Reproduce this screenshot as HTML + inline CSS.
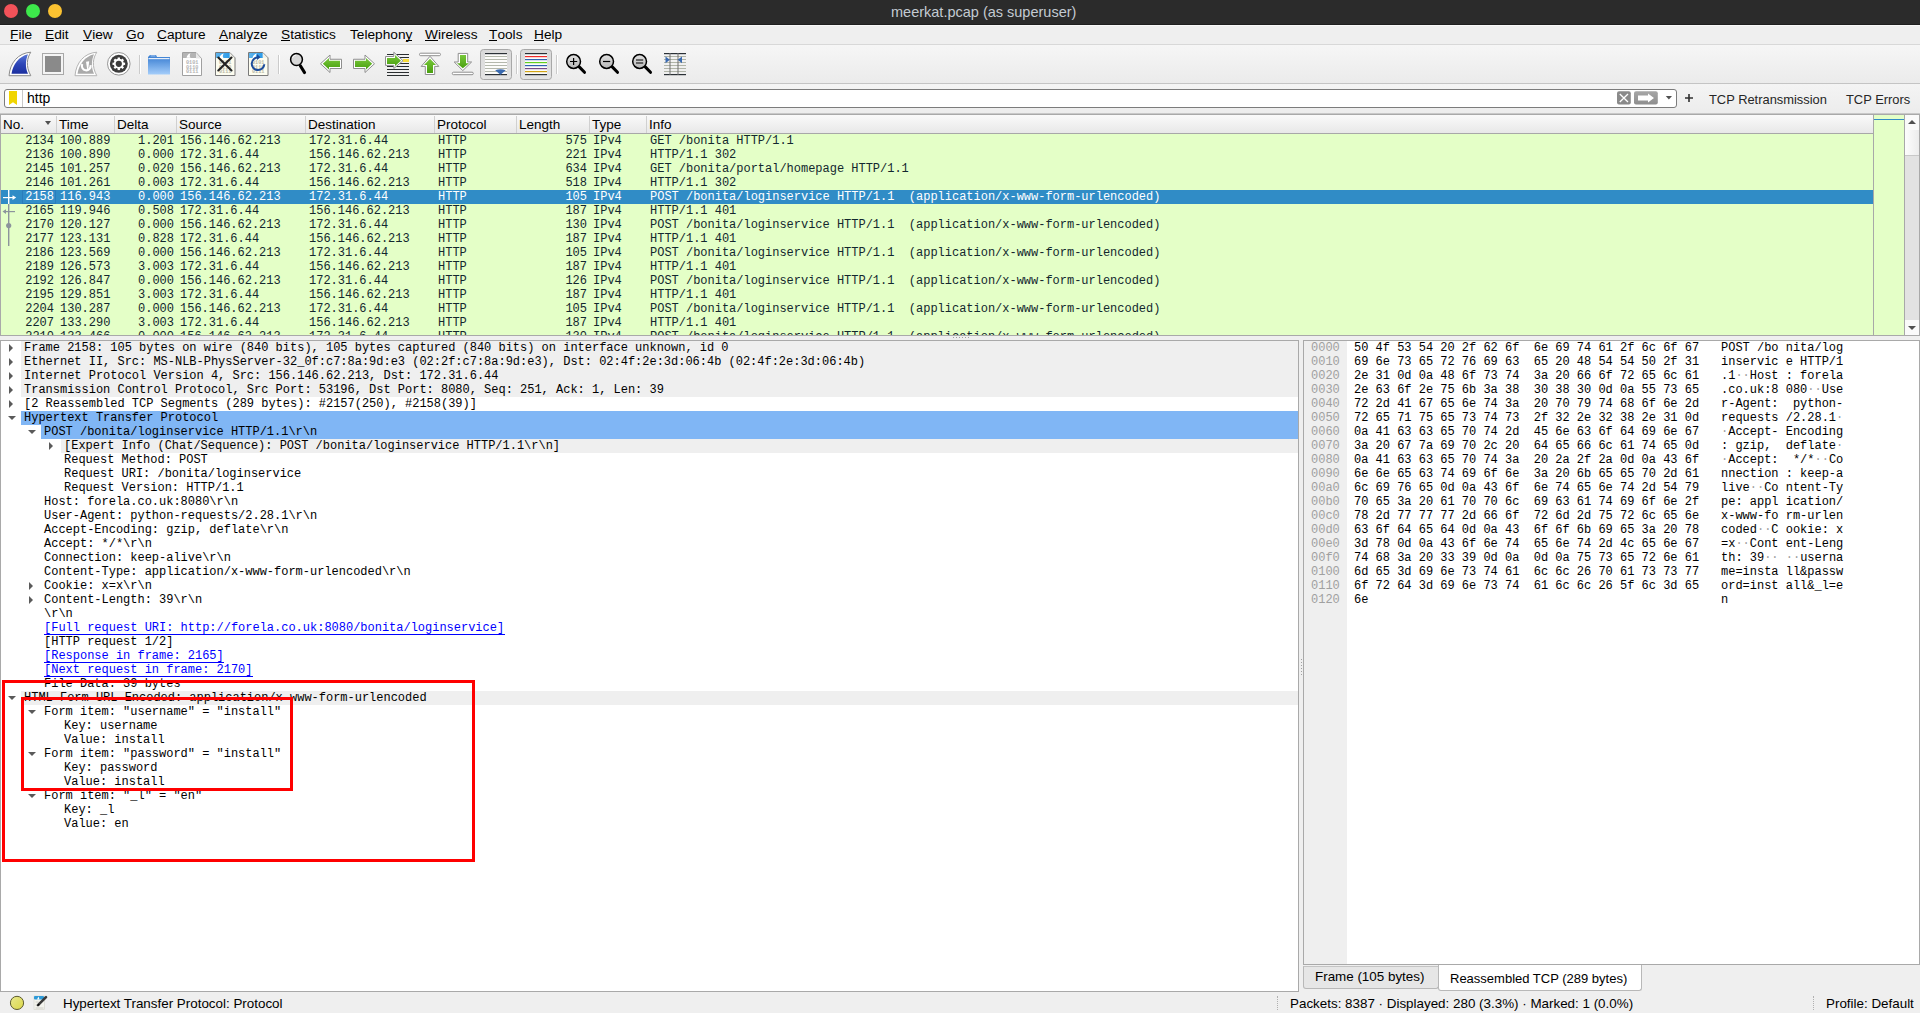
<!DOCTYPE html><html><head><meta charset="utf-8"><style>
*{margin:0;padding:0;box-sizing:border-box}
html,body{width:1920px;height:1013px;overflow:hidden;background:#efefef;font-family:"Liberation Sans",sans-serif;position:relative}
.ab{position:absolute}
.m{font-family:"Liberation Mono",monospace;font-size:12px;white-space:pre;line-height:14px;letter-spacing:-0.012px}
.s{font-family:"Liberation Sans",sans-serif;font-size:13px;white-space:pre}
.menu span{position:absolute;top:27px;font-size:13.7px;color:#000;line-height:15px}
.menu u{text-decoration:none;position:relative}.menu u:after{content:'';position:absolute;left:0;right:0;top:13px;height:1px;background:#000}
.hdr span{position:absolute;top:117px;font-size:13.5px;line-height:15px;color:#000}
.hdrdiv{position:absolute;top:116px;width:1px;height:17px;background:#d0d0d0}
.row{position:absolute;left:1px;width:1872px;height:14px;background:#e4ffc7;color:#12272e}
.row.sel{background:#308cc6;color:#fff}
.row span{position:absolute;top:0}
.dr{position:absolute;height:14px;color:#000}
.hx{position:absolute;height:14px;color:#000}
</style></head><body>

<div class="ab" style="left:0;top:0;width:1920px;height:25px;background:#2b2b2b"></div>
<div class="ab" style="left:0;top:24px;width:1920px;height:1px;background:#1f1f1f"></div>
<div class="ab" style="left:4px;top:4px;width:14px;height:14px;border-radius:50%;background:#f25259"></div>
<div class="ab" style="left:26px;top:4px;width:14px;height:14px;border-radius:50%;background:#3de84b"></div>
<div class="ab" style="left:48px;top:4px;width:14px;height:14px;border-radius:50%;background:#fbc231"></div>
<div class="ab s" style="left:891px;top:3px;font-size:14.5px;line-height:18px;color:#c3cad2">meerkat.pcap (as superuser)</div>
<div class="ab" style="left:0;top:25px;width:1920px;height:1px;background:#f9f9f9"></div>
<div class="ab" style="left:0;top:44px;width:1920px;height:1px;background:#d8d8d8"></div>
<div class="menu">
<span style="left:10px"><u>F</u>ile</span>
<span style="left:45px"><u>E</u>dit</span>
<span style="left:83px"><u>V</u>iew</span>
<span style="left:126px"><u>G</u>o</span>
<span style="left:157px"><u>C</u>apture</span>
<span style="left:219px"><u>A</u>nalyze</span>
<span style="left:281px"><u>S</u>tatistics</span>
<span style="left:350px">Telephon<u>y</u></span>
<span style="left:425px"><u>W</u>ireless</span>
<span style="left:489px"><u>T</u>ools</span>
<span style="left:534px"><u>H</u>elp</span>
</div>
<div class="ab" style="left:0;top:45px;width:1920px;height:38px;background:linear-gradient(#f6f6f6,#ebebeb)"></div>
<div class="ab" style="left:0;top:83px;width:1920px;height:1px;background:#c4c4c4"></div>
<svg class="ab" style="left:0;top:0" width="700" height="84" viewBox="0 0 700 84">
<defs>
<linearGradient id="gfin" x1="0" y1="0" x2="0" y2="1"><stop offset="0" stop-color="#5a78d8"/><stop offset="0.5" stop-color="#2d46b8"/><stop offset="1" stop-color="#1c30a0"/></linearGradient>
<linearGradient id="ggreen" x1="0" y1="0" x2="0" y2="1"><stop offset="0" stop-color="#78c83a"/><stop offset="1" stop-color="#4aa010"/></linearGradient>
<linearGradient id="gfold" x1="0" y1="0" x2="0" y2="1"><stop offset="0" stop-color="#3a7ed0"/><stop offset="0.2" stop-color="#4a8ad8"/><stop offset="1" stop-color="#a4cdfa"/></linearGradient>
<linearGradient id="glens" x1="0" y1="0" x2="0" y2="1"><stop offset="0" stop-color="#e0e0e0"/><stop offset="1" stop-color="#b8b8b8"/></linearGradient>
<linearGradient id="gbtn" x1="0" y1="0" x2="0" y2="1"><stop offset="0" stop-color="#d8d8d8"/><stop offset="1" stop-color="#e4e4e4"/></linearGradient>
<linearGradient id="gdochead" x1="0" y1="0" x2="1" y2="0"><stop offset="0" stop-color="#60b4ec"/><stop offset="1" stop-color="#2a9ae8"/></linearGradient>
</defs>
<!-- capture start fin -->
<path d="M9,75.7 C10,63 18,53 30.8,52.2 C27,58 25.5,66 30.8,75.7 Z" fill="#fff" stroke="#8a8a8a" stroke-width="1"/>
<path d="M11.5,73.7 C13,64 19,56.5 28,54.2 C25.5,60 25,67 28,73.7 Z" fill="url(#gfin)"/>
<!-- stop -->
<rect x="42.5" y="53.5" width="21" height="21" fill="#f4f4f4" stroke="#a8a8a8" stroke-width="1"/>
<rect x="45" y="56" width="16" height="16" fill="#8a8a8a"/>
<!-- restart fin -->
<path d="M75,75.7 C76,63 84,53 96.8,52.2 C93,58 91.5,66 96.8,75.7 Z" fill="#fff" stroke="#b4b4b4" stroke-width="1"/>
<path d="M77.5,73.7 C79,64 85,56.5 94,54.2 C91.5,60 91,67 94,73.7 Z" fill="#aaaaaa"/>
<path d="M82.3,64 A4.4,4.4 0 1 0 90.6,65.2" fill="none" stroke="#fff" stroke-width="2.1"/>
<path d="M86,61.8 L89.2,61.2 L88.2,69.2 L87.2,69.2 Z" fill="#fff"/>
<!-- options gear -->
<circle cx="118.8" cy="63.8" r="11.3" fill="#fff" stroke="#969696" stroke-width="1"/>
<circle cx="118.8" cy="63.8" r="9" fill="#3c3c3c"/>
<g fill="#fff" transform="translate(118.8,63.8)">
<circle r="5"/>
<rect x="-1.15" y="-6.3" width="2.3" height="12.6"/>
<rect x="-1.15" y="-6.3" width="2.3" height="12.6" transform="rotate(45)"/>
<rect x="-1.15" y="-6.3" width="2.3" height="12.6" transform="rotate(90)"/>
<rect x="-1.15" y="-6.3" width="2.3" height="12.6" transform="rotate(135)"/>
</g>
<circle cx="118.8" cy="63.8" r="3.1" fill="#3c3c3c"/>
<!-- separator -->
<rect x="139" y="55" width="1" height="19" fill="#cbcbcb"/><rect x="140" y="55" width="1" height="19" fill="#fff"/>
<!-- folder -->
<path d="M148,57 L150,55 L156,55 L157,57 L170,57 L170,74.5 L148,74.5 Z" fill="url(#gfold)"/>
<rect x="148.5" y="58" width="21" height="1.2" fill="#e6eefa"/>
<rect x="150.5" y="55.3" width="5" height="1.2" fill="#9ec2ee"/>
<!-- open doc (grey) -->
<path d="M182.5,52.5 L196,52.5 L201.5,58.5 L201.5,75.5 L182.5,75.5 Z" fill="#fff" stroke="#a0a0a0" stroke-width="1"/>
<rect x="183" y="53" width="13" height="5" fill="#b4b4b4"/><path d="M196,53 L201,58.5 L196,58.5 Z" fill="#e8e8e8"/>
<path d="M186.5,57.8 C187,55 189,53.5 190.5,53.2 C189.5,55 189.5,56.5 190.5,57.8 Z" fill="#fff"/>
<g font-family="Liberation Mono" font-size="5.2" fill="#b4b4b4" font-weight="bold"><text x="186" y="64.3">0101</text><text x="186" y="68.8">0110</text><text x="186" y="73.3">0111</text></g>
<!-- close doc -->
<path d="M215.5,52.5 L229.8,52.5 L235,57.8 L235,75.5 L215.5,75.5 Z" fill="#fdfdf0" stroke="#7a7a7a" stroke-width="1"/>
<rect x="216" y="53" width="13.8" height="5" fill="url(#gdochead)"/><path d="M229.8,53 L234.5,57.8 L229.8,57.8 Z" fill="#f0f0e8"/>
<path d="M219.5,58 C220,55.5 221.5,54 223.8,53.5 C222.5,55.5 222.5,56.5 223.5,58 Z" fill="#fff"/>
<g font-family="Liberation Mono" font-size="5.2" fill="#b8b8a8" font-weight="bold"><text x="219" y="64.3">0101</text><text x="219" y="68.8">0110</text><text x="219" y="73.3">0111</text></g>
<path d="M218.3,57.6 L231.5,70.5 M231.5,57.6 L218.3,70.5" stroke="#222" stroke-width="2.1" stroke-linecap="round"/>
<!-- reload doc -->
<path d="M248.5,52.5 L262.8,52.5 L268,57.8 L268,75.5 L248.5,75.5 Z" fill="#fdfdf0" stroke="#7a7a7a" stroke-width="1"/>
<rect x="249" y="53" width="13.8" height="5" fill="url(#gdochead)"/><path d="M262.8,53 L267.5,57.8 L262.8,57.8 Z" fill="#f0f0e8"/>
<path d="M252.5,58 C253,55.5 254.5,54 256.8,53.5 C255.5,55.5 255.5,56.5 256.5,58 Z" fill="#fff"/>
<g font-family="Liberation Mono" font-size="5.2" fill="#b8b8a8" font-weight="bold"><text x="252" y="64.3">0101</text><text x="252" y="68.8">0110</text><text x="252" y="73.3">0111</text></g>
<path d="M258.5,57.5 A6.3,6.3 0 1 0 264.3,64.2" fill="none" stroke="#1c4c9c" stroke-width="2"/>
<path d="M257,54 L260.5,57.2 L257,60 Z" fill="#1c4c9c"/>
<!-- separator -->
<rect x="278" y="55" width="1" height="19" fill="#cbcbcb"/><rect x="279" y="55" width="1" height="19" fill="#fff"/>
<!-- find magnifier -->
<path d="M300.5,66 L304.5,72.5" stroke="#000" stroke-width="3.2" stroke-linecap="round"/>
<circle cx="296.5" cy="59.5" r="5.9" fill="#d8d8d8" stroke="#000" stroke-width="1.5"/>
<path d="M292.5,58 A4,4 0 0 1 296,55" fill="none" stroke="#fff" stroke-width="0.8"/>
<!-- go back arrow -->
<path d="M320.5,63.75 L330,55 L330,59.25 L341.5,59.25 L341.5,68.5 L330,68.5 L330,72.5 Z" fill="#fff" stroke="#8e8e8e" stroke-width="1" stroke-linejoin="round"/>
<path d="M322.8,63.75 L329,58 L329,60.8 L340,60.8 L340,67 L329,67 L329,69.5 Z" fill="url(#ggreen)"/>
<!-- go forward arrow -->
<path d="M374.5,63.75 L365,55 L365,59.25 L353.5,59.25 L353.5,68.5 L365,68.5 L365,72.5 Z" fill="#fff" stroke="#8e8e8e" stroke-width="1" stroke-linejoin="round"/>
<path d="M372.2,63.75 L366,58 L366,60.8 L355,60.8 L355,67 L366,67 L366,69.5 Z" fill="url(#ggreen)"/>
<!-- go to packet -->
<g fill="#2a2e30">
<rect x="387" y="54" width="22" height="1"/><rect x="387" y="57" width="22" height="1"/><rect x="387" y="63" width="22" height="1"/><rect x="387" y="66" width="22" height="1"/><rect x="387" y="69" width="22" height="1"/><rect x="387" y="72" width="22" height="1"/><rect x="387" y="75" width="22" height="1"/>
</g>
<rect x="403" y="59" width="6" height="3" fill="#f8dc3c"/>
<path d="M385.5,56.5 L393.8,56.5 L393.8,52.2 L403,60.7 L393.8,68.5 L393.8,65.4 L385.5,65.4 Z" fill="#fff" stroke="#8e8e8e" stroke-width="1" stroke-linejoin="round"/>
<path d="M387,58 L395,58 L395,55 L401,60.7 L395,66 L395,64 L387,64 Z" fill="url(#ggreen)"/>
<!-- first packet -->
<rect x="419.5" y="53.2" width="21" height="2.5" rx="1.2" fill="#fff" stroke="#8e8e8e" stroke-width="1"/>
<path d="M430,56.3 L438.8,66.4 L434.7,66.4 L434.7,74.5 L425.3,74.5 L425.3,66.4 L421.2,66.4 Z" fill="#fff" stroke="#8e8e8e" stroke-width="1" stroke-linejoin="round"/>
<path d="M430,58.8 L436,65 L433,65 L433,73 L427,73 L427,65 L424,65 Z" fill="url(#ggreen)"/>
<!-- last packet -->
<rect x="452.3" y="72.2" width="21" height="2.5" rx="1.2" fill="#fff" stroke="#8e8e8e" stroke-width="1"/>
<path d="M462.8,70.6 L471.6,62 L467.7,62 L467.7,53.4 L458.2,53.4 L458.2,62 L454.2,62 Z" fill="#fff" stroke="#8e8e8e" stroke-width="1" stroke-linejoin="round"/>
<path d="M462.8,68.2 L469,63.3 L466,63.3 L466,55 L460,55 L460,63.3 L457,63.3 Z" fill="url(#ggreen)"/>
<!-- autoscroll pressed button -->
<rect x="480.5" y="49.5" width="31" height="30" rx="3" fill="url(#gbtn)" stroke="#a8a8a8" stroke-width="1"/>
<rect x="485" y="53" width="22" height="22" fill="#fcfcfa"/>
<g fill="#b4b8ac"><rect x="485" y="56" width="22" height="1"/><rect x="485" y="59" width="22" height="1"/><rect x="485" y="62" width="22" height="1"/><rect x="485" y="65" width="22" height="1"/><rect x="485" y="68" width="22" height="1"/><rect x="485" y="71" width="22" height="1"/></g>
<rect x="485" y="53" width="22" height="1.2" fill="#2a3036"/><rect x="485" y="74" width="22" height="1.2" fill="#2a3036"/>
<path d="M495.2,70.2 Q500.5,68.5 505.7,70.2 L500.5,74.8 Z" fill="#3a6ab0"/>
<!-- separator -->
<rect x="516" y="55" width="1" height="19" fill="#cbcbcb"/><rect x="517" y="55" width="1" height="19" fill="#fff"/>
<!-- colorize pressed button -->
<rect x="520.5" y="49.5" width="31" height="30" rx="3" fill="url(#gbtn)" stroke="#a8a8a8" stroke-width="1"/>
<rect x="525" y="53" width="22" height="22" fill="#fcfcfa"/>
<rect x="525" y="53" width="22" height="1.2" fill="#2a3036"/>
<rect x="525" y="56" width="22" height="1.2" fill="#f02a2a"/>
<rect x="525" y="59" width="22" height="1.2" fill="#2f62b2"/>
<rect x="525" y="62" width="22" height="1.2" fill="#62d020"/>
<rect x="525" y="65" width="22" height="1.2" fill="#2f62b2"/>
<rect x="525" y="68" width="22" height="1.2" fill="#744c8a"/>
<rect x="525" y="71" width="22" height="1.2" fill="#d2a414"/>
<rect x="525" y="74" width="22" height="1.2" fill="#2a3036"/>
<!-- separator -->
<rect x="556" y="55" width="1" height="19" fill="#cbcbcb"/><rect x="557" y="55" width="1" height="19" fill="#fff"/>
<!-- zoom in / out / normal -->
<g>
<path d="M579,66.6 L584.5,72.3" stroke="#000" stroke-width="3" stroke-linecap="round"/>
<circle cx="573.6" cy="61.5" r="6.9" fill="url(#glens)" stroke="#000" stroke-width="1.5"/>
<path d="M570,61.5 h7.2 M573.6,57.9 v7.2" stroke="#000" stroke-width="1.2"/>
<path d="M612,66.6 L617.5,72.3" stroke="#000" stroke-width="3" stroke-linecap="round"/>
<circle cx="606.6" cy="61.5" r="6.9" fill="url(#glens)" stroke="#000" stroke-width="1.5"/>
<path d="M603,61.5 h7.2" stroke="#000" stroke-width="1.2"/>
<path d="M645,66.6 L650.5,72.3" stroke="#000" stroke-width="3" stroke-linecap="round"/>
<circle cx="639.6" cy="61.5" r="6.9" fill="url(#glens)" stroke="#000" stroke-width="1.5"/>
<path d="M636,60 h7.2 M636,63 h7.2" stroke="#000" stroke-width="1.1"/>
</g>
<!-- resize columns -->
<g fill="#b0b4a8"><rect x="664" y="56" width="22" height="1"/><rect x="664" y="59" width="22" height="1"/><rect x="664" y="62" width="22" height="1"/><rect x="664" y="65" width="22" height="1"/><rect x="664" y="68" width="22" height="1"/><rect x="664" y="71" width="22" height="1"/></g>
<rect x="664" y="53" width="22" height="1.2" fill="#2a3036"/><rect x="664" y="74" width="22" height="1.2" fill="#2a3036"/>
<rect x="669.5" y="53" width="1" height="22" fill="#707070"/><rect x="677.5" y="53" width="1" height="22" fill="#707070"/>
<path d="M665.5,56.5 L669.8,59.8 L665.5,63.2 Z" fill="#3a6ab0"/>
<path d="M682,56.5 L677.7,59.8 L682,63.2 Z" fill="#3a6ab0"/>
</svg>

<div class="ab" style="left:0;top:84px;width:1920px;height:30px;background:linear-gradient(#f4f4f4,#ececec)"></div>
<div class="ab" style="left:4px;top:89px;width:1673px;height:19px;border:1px solid #7c7c7c;border-radius:3px;background:#fff"></div>
<div class="ab" style="left:22px;top:90px;width:1px;height:17px;background:#c8c8c8"></div>
<div class="ab" style="left:9px;top:91px;width:8px;height:14px;background:#f0d400;clip-path:polygon(0 0,100% 0,100% 100%,50% 80%,0 100%)"></div>
<div class="ab s" style="left:27px;top:90px;font-size:14px;line-height:16px;color:#000">http</div>
<svg class="ab" style="left:1610px;top:86px" width="90" height="26" viewBox="1610 86 90 26">
<defs><linearGradient id="garr" x1="0" y1="0" x2="0" y2="1"><stop offset="0" stop-color="#a6a6a6"/><stop offset="1" stop-color="#8e8e8e"/></linearGradient></defs>
<rect x="1617" y="91.2" width="13.8" height="13.4" rx="2" fill="#8a8a8a"/>
<path d="M1619.8,94 L1628,102 M1628,94 L1619.8,102" stroke="#fff" stroke-width="1.3"/>
<rect x="1634" y="91.2" width="23.8" height="13.4" rx="2" fill="url(#garr)"/>
<path d="M1638,95.5 L1648,95.5 L1648,93.5 L1654,98 L1648,102.5 L1648,100.5 L1638,100.5 Z" fill="#fff"/>
<path d="M1665.8,96 L1672,96 L1668.9,99.5 Z" fill="#505050"/>
<path d="M1685,98 h8 M1689,94 v8" stroke="#303030" stroke-width="1.6"/>
</svg>

<div class="ab s" style="left:1709px;top:92px;font-size:12.9px;line-height:15px;color:#262626">TCP Retransmission</div>
<div class="ab s" style="left:1846px;top:92px;font-size:12.9px;line-height:15px;color:#262626">TCP Errors</div>
<div class="ab" style="left:0;top:114px;width:1920px;height:222px;border:1px solid #a9a9a9;background:#e4ffc7"></div>
<div class="ab" style="left:1px;top:115px;width:1872px;height:18px;background:linear-gradient(#fafafa,#e8e8e8)"></div>
<div class="ab" style="left:1px;top:133px;width:1872px;height:1px;background:#a8a8a8"></div>
<div class="hdr">
<span style="left:3px">No.</span>
<div class="hdrdiv" style="left:56px"></div>
<span style="left:59px">Time</span>
<div class="hdrdiv" style="left:114px"></div>
<span style="left:117px">Delta</span>
<div class="hdrdiv" style="left:176px"></div>
<span style="left:179px">Source</span>
<div class="hdrdiv" style="left:305px"></div>
<span style="left:308px">Destination</span>
<div class="hdrdiv" style="left:434px"></div>
<span style="left:437px">Protocol</span>
<div class="hdrdiv" style="left:516px"></div>
<span style="left:519px">Length</span>
<div class="hdrdiv" style="left:589px"></div>
<span style="left:592px">Type</span>
<div class="hdrdiv" style="left:646px"></div>
<span style="left:649px">Info</span>
</div>
<div class="ab" style="left:45px;top:121px;width:0;height:0;border-left:3.5px solid transparent;border-right:3.5px solid transparent;border-top:4px solid #505050"></div>
<div class="ab" style="left:1px;top:134px;width:1872px;height:201px;overflow:hidden">
<div class="row m" style="top:0px;left:0">
<span style="left:24.2px">2134</span><span style="left:59px">100.889</span><span style="left:137.0px">1.201</span><span style="left:179px">156.146.62.213</span><span style="left:308px">172.31.6.44</span><span style="left:437px">HTTP</span><span style="left:564.4px">575</span><span style="left:592px">IPv4</span><span style="left:649px">GET /bonita HTTP/1.1</span>
</div>
<div class="row m" style="top:14px;left:0">
<span style="left:24.2px">2136</span><span style="left:59px">100.890</span><span style="left:137.0px">0.000</span><span style="left:179px">172.31.6.44</span><span style="left:308px">156.146.62.213</span><span style="left:437px">HTTP</span><span style="left:564.4px">221</span><span style="left:592px">IPv4</span><span style="left:649px">HTTP/1.1 302</span>
</div>
<div class="row m" style="top:28px;left:0">
<span style="left:24.2px">2145</span><span style="left:59px">101.257</span><span style="left:137.0px">0.020</span><span style="left:179px">156.146.62.213</span><span style="left:308px">172.31.6.44</span><span style="left:437px">HTTP</span><span style="left:564.4px">634</span><span style="left:592px">IPv4</span><span style="left:649px">GET /bonita/portal/homepage HTTP/1.1</span>
</div>
<div class="row m" style="top:42px;left:0">
<span style="left:24.2px">2146</span><span style="left:59px">101.261</span><span style="left:137.0px">0.003</span><span style="left:179px">172.31.6.44</span><span style="left:308px">156.146.62.213</span><span style="left:437px">HTTP</span><span style="left:564.4px">518</span><span style="left:592px">IPv4</span><span style="left:649px">HTTP/1.1 302</span>
</div>
<div class="row sel m" style="top:56px;left:0">
<span style="left:21px;top:0;width:34px;height:14px;border:1px solid #2a7cbc;background:#338ec9"></span>
<span style="left:24.2px">2158</span><span style="left:59px">116.943</span><span style="left:137.0px">0.000</span><span style="left:179px">156.146.62.213</span><span style="left:308px">172.31.6.44</span><span style="left:437px">HTTP</span><span style="left:564.4px">105</span><span style="left:592px">IPv4</span><span style="left:649px">POST /bonita/loginservice HTTP/1.1  (application/x-www-form-urlencoded)</span>
</div>
<div class="row m" style="top:70px;left:0">
<span style="left:24.2px">2165</span><span style="left:59px">119.946</span><span style="left:137.0px">0.508</span><span style="left:179px">172.31.6.44</span><span style="left:308px">156.146.62.213</span><span style="left:437px">HTTP</span><span style="left:564.4px">187</span><span style="left:592px">IPv4</span><span style="left:649px">HTTP/1.1 401</span>
</div>
<div class="row m" style="top:84px;left:0">
<span style="left:24.2px">2170</span><span style="left:59px">120.127</span><span style="left:137.0px">0.000</span><span style="left:179px">156.146.62.213</span><span style="left:308px">172.31.6.44</span><span style="left:437px">HTTP</span><span style="left:564.4px">130</span><span style="left:592px">IPv4</span><span style="left:649px">POST /bonita/loginservice HTTP/1.1  (application/x-www-form-urlencoded)</span>
</div>
<div class="row m" style="top:98px;left:0">
<span style="left:24.2px">2177</span><span style="left:59px">123.131</span><span style="left:137.0px">0.828</span><span style="left:179px">172.31.6.44</span><span style="left:308px">156.146.62.213</span><span style="left:437px">HTTP</span><span style="left:564.4px">187</span><span style="left:592px">IPv4</span><span style="left:649px">HTTP/1.1 401</span>
</div>
<div class="row m" style="top:112px;left:0">
<span style="left:24.2px">2186</span><span style="left:59px">123.569</span><span style="left:137.0px">0.000</span><span style="left:179px">156.146.62.213</span><span style="left:308px">172.31.6.44</span><span style="left:437px">HTTP</span><span style="left:564.4px">105</span><span style="left:592px">IPv4</span><span style="left:649px">POST /bonita/loginservice HTTP/1.1  (application/x-www-form-urlencoded)</span>
</div>
<div class="row m" style="top:126px;left:0">
<span style="left:24.2px">2189</span><span style="left:59px">126.573</span><span style="left:137.0px">3.003</span><span style="left:179px">172.31.6.44</span><span style="left:308px">156.146.62.213</span><span style="left:437px">HTTP</span><span style="left:564.4px">187</span><span style="left:592px">IPv4</span><span style="left:649px">HTTP/1.1 401</span>
</div>
<div class="row m" style="top:140px;left:0">
<span style="left:24.2px">2192</span><span style="left:59px">126.847</span><span style="left:137.0px">0.000</span><span style="left:179px">156.146.62.213</span><span style="left:308px">172.31.6.44</span><span style="left:437px">HTTP</span><span style="left:564.4px">126</span><span style="left:592px">IPv4</span><span style="left:649px">POST /bonita/loginservice HTTP/1.1  (application/x-www-form-urlencoded)</span>
</div>
<div class="row m" style="top:154px;left:0">
<span style="left:24.2px">2195</span><span style="left:59px">129.851</span><span style="left:137.0px">3.003</span><span style="left:179px">172.31.6.44</span><span style="left:308px">156.146.62.213</span><span style="left:437px">HTTP</span><span style="left:564.4px">187</span><span style="left:592px">IPv4</span><span style="left:649px">HTTP/1.1 401</span>
</div>
<div class="row m" style="top:168px;left:0">
<span style="left:24.2px">2204</span><span style="left:59px">130.287</span><span style="left:137.0px">0.000</span><span style="left:179px">156.146.62.213</span><span style="left:308px">172.31.6.44</span><span style="left:437px">HTTP</span><span style="left:564.4px">105</span><span style="left:592px">IPv4</span><span style="left:649px">POST /bonita/loginservice HTTP/1.1  (application/x-www-form-urlencoded)</span>
</div>
<div class="row m" style="top:182px;left:0">
<span style="left:24.2px">2207</span><span style="left:59px">133.290</span><span style="left:137.0px">3.003</span><span style="left:179px">172.31.6.44</span><span style="left:308px">156.146.62.213</span><span style="left:437px">HTTP</span><span style="left:564.4px">187</span><span style="left:592px">IPv4</span><span style="left:649px">HTTP/1.1 401</span>
</div>
<div class="row m" style="top:196px;left:0">
<span style="left:24.2px">2210</span><span style="left:59px">133.466</span><span style="left:137.0px">0.000</span><span style="left:179px">156.146.62.213</span><span style="left:308px">172.31.6.44</span><span style="left:437px">HTTP</span><span style="left:564.4px">130</span><span style="left:592px">IPv4</span><span style="left:649px">POST /bonita/loginservice HTTP/1.1  (application/x-www-form-urlencoded)</span>
</div>
</div>
<!--RELATED-->
<div class="ab" style="left:1873px;top:115px;width:1px;height:220px;background:#a8a8a8"></div>
<div class="ab" style="left:1874px;top:119px;width:30px;height:1px;background:#308cc6"></div>
<div class="ab" style="left:1904px;top:115px;width:1px;height:220px;background:#a8a8a8"></div>
<div class="ab" style="left:1905px;top:115px;width:14px;height:220px;background:#e2e2e2"></div>
<div class="ab" style="left:1905px;top:115px;width:14px;height:15px;background:#fafafa"></div>
<div class="ab" style="left:1905px;top:130px;width:14px;height:26px;background:linear-gradient(90deg,#fdfdfd,#ececec);border-bottom:1px solid #c8c8c8"></div>
<div class="ab" style="left:1905px;top:320px;width:14px;height:15px;background:#fafafa"></div>
<div class="ab" style="left:1908px;top:120px;width:0;height:0;border-left:4px solid transparent;border-right:4px solid transparent;border-bottom:4px solid #505050"></div>
<div class="ab" style="left:1908px;top:326px;width:0;height:0;border-left:4px solid transparent;border-right:4px solid transparent;border-top:4px solid #505050"></div>
<div class="ab" style="left:0;top:340px;width:1299px;height:652px;border:1px solid #a9a9a9;background:#fff"></div>
<div class="ab" style="left:1px;top:341px;width:1297px;height:650px;overflow:hidden">
<div class="ab" style="left:20px;top:0px;width:1277px;height:14px;background:#efefef"></div>
<div class="ab" style="left:8px;top:3px;width:0;height:0;border-top:4px solid transparent;border-bottom:4px solid transparent;border-left:4px solid #5a5a5a"></div>
<div class="dr m" style="left:23px;top:0px;">Frame 2158: 105 bytes on wire (840 bits), 105 bytes captured (840 bits) on interface unknown, id 0</div>
<div class="ab" style="left:20px;top:14px;width:1277px;height:14px;background:#efefef"></div>
<div class="ab" style="left:8px;top:17px;width:0;height:0;border-top:4px solid transparent;border-bottom:4px solid transparent;border-left:4px solid #5a5a5a"></div>
<div class="dr m" style="left:23px;top:14px;">Ethernet II, Src: MS-NLB-PhysServer-32_0f:c7:8a:9d:e3 (02:2f:c7:8a:9d:e3), Dst: 02:4f:2e:3d:06:4b (02:4f:2e:3d:06:4b)</div>
<div class="ab" style="left:20px;top:28px;width:1277px;height:14px;background:#efefef"></div>
<div class="ab" style="left:8px;top:31px;width:0;height:0;border-top:4px solid transparent;border-bottom:4px solid transparent;border-left:4px solid #5a5a5a"></div>
<div class="dr m" style="left:23px;top:28px;">Internet Protocol Version 4, Src: 156.146.62.213, Dst: 172.31.6.44</div>
<div class="ab" style="left:20px;top:42px;width:1277px;height:14px;background:#efefef"></div>
<div class="ab" style="left:8px;top:45px;width:0;height:0;border-top:4px solid transparent;border-bottom:4px solid transparent;border-left:4px solid #5a5a5a"></div>
<div class="dr m" style="left:23px;top:42px;">Transmission Control Protocol, Src Port: 53196, Dst Port: 8080, Seq: 251, Ack: 1, Len: 39</div>
<div class="ab" style="left:8px;top:59px;width:0;height:0;border-top:4px solid transparent;border-bottom:4px solid transparent;border-left:4px solid #5a5a5a"></div>
<div class="dr m" style="left:23px;top:56px;">[2 Reassembled TCP Segments (289 bytes): #2157(250), #2158(39)]</div>
<div class="ab" style="left:20px;top:70px;width:1277px;height:14px;background:#80b6f5"></div>
<div class="ab" style="left:7px;top:75px;width:0;height:0;border-left:4px solid transparent;border-right:4px solid transparent;border-top:4px solid #5a5a5a"></div>
<div class="dr m" style="left:23px;top:70px;">Hypertext Transfer Protocol</div>
<div class="ab" style="left:40px;top:84px;width:1257px;height:14px;background:#80b6f5"></div>
<div class="ab" style="left:27px;top:89px;width:0;height:0;border-left:4px solid transparent;border-right:4px solid transparent;border-top:4px solid #5a5a5a"></div>
<div class="dr m" style="left:43px;top:84px;">POST /bonita/loginservice HTTP/1.1\r\n</div>
<div class="ab" style="left:60px;top:98px;width:1237px;height:14px;background:#efefef"></div>
<div class="ab" style="left:48px;top:101px;width:0;height:0;border-top:4px solid transparent;border-bottom:4px solid transparent;border-left:4px solid #5a5a5a"></div>
<div class="dr m" style="left:63px;top:98px;">[Expert Info (Chat/Sequence): POST /bonita/loginservice HTTP/1.1\r\n]</div>
<div class="dr m" style="left:63px;top:112px;">Request Method: POST</div>
<div class="dr m" style="left:63px;top:126px;">Request URI: /bonita/loginservice</div>
<div class="dr m" style="left:63px;top:140px;">Request Version: HTTP/1.1</div>
<div class="dr m" style="left:43px;top:154px;">Host: forela.co.uk:8080\r\n</div>
<div class="dr m" style="left:43px;top:168px;">User-Agent: python-requests/2.28.1\r\n</div>
<div class="dr m" style="left:43px;top:182px;">Accept-Encoding: gzip, deflate\r\n</div>
<div class="dr m" style="left:43px;top:196px;">Accept: */*\r\n</div>
<div class="dr m" style="left:43px;top:210px;">Connection: keep-alive\r\n</div>
<div class="dr m" style="left:43px;top:224px;">Content-Type: application/x-www-form-urlencoded\r\n</div>
<div class="ab" style="left:28px;top:241px;width:0;height:0;border-top:4px solid transparent;border-bottom:4px solid transparent;border-left:4px solid #5a5a5a"></div>
<div class="dr m" style="left:43px;top:238px;">Cookie: x=x\r\n</div>
<div class="ab" style="left:28px;top:255px;width:0;height:0;border-top:4px solid transparent;border-bottom:4px solid transparent;border-left:4px solid #5a5a5a"></div>
<div class="dr m" style="left:43px;top:252px;">Content-Length: 39\r\n</div>
<div class="dr m" style="left:43px;top:266px;">\r\n</div>
<div class="dr m" style="left:43px;top:280px;color:#0000ff">[Full request URI: http://forela.co.uk:8080/bonita/loginservice]</div>
<div class="ab" style="left:43px;top:293px;width:460.8px;height:1px;background:#0000ff"></div>
<div class="dr m" style="left:43px;top:294px;">[HTTP request 1/2]</div>
<div class="dr m" style="left:43px;top:308px;color:#0000ff">[Response in frame: 2165]</div>
<div class="ab" style="left:43px;top:321px;width:180.0px;height:1px;background:#0000ff"></div>
<div class="dr m" style="left:43px;top:322px;color:#0000ff">[Next request in frame: 2170]</div>
<div class="ab" style="left:43px;top:335px;width:208.8px;height:1px;background:#0000ff"></div>
<div class="dr m" style="left:43px;top:336px;">File Data: 39 bytes</div>
<div class="ab" style="left:20px;top:350px;width:1277px;height:14px;background:#efefef"></div>
<div class="ab" style="left:7px;top:355px;width:0;height:0;border-left:4px solid transparent;border-right:4px solid transparent;border-top:4px solid #5a5a5a"></div>
<div class="dr m" style="left:23px;top:350px;">HTML Form URL Encoded: application/x-www-form-urlencoded</div>
<div class="ab" style="left:27px;top:369px;width:0;height:0;border-left:4px solid transparent;border-right:4px solid transparent;border-top:4px solid #5a5a5a"></div>
<div class="dr m" style="left:43px;top:364px;">Form item: &quot;username&quot; = &quot;install&quot;</div>
<div class="dr m" style="left:63px;top:378px;">Key: username</div>
<div class="dr m" style="left:63px;top:392px;">Value: install</div>
<div class="ab" style="left:27px;top:411px;width:0;height:0;border-left:4px solid transparent;border-right:4px solid transparent;border-top:4px solid #5a5a5a"></div>
<div class="dr m" style="left:43px;top:406px;">Form item: &quot;password&quot; = &quot;install&quot;</div>
<div class="dr m" style="left:63px;top:420px;">Key: password</div>
<div class="dr m" style="left:63px;top:434px;">Value: install</div>
<div class="ab" style="left:27px;top:453px;width:0;height:0;border-left:4px solid transparent;border-right:4px solid transparent;border-top:4px solid #5a5a5a"></div>
<div class="dr m" style="left:43px;top:448px;">Form item: &quot;_l&quot; = &quot;en&quot;</div>
<div class="dr m" style="left:63px;top:462px;">Key: _l</div>
<div class="dr m" style="left:63px;top:476px;">Value: en</div>
</div>
<div class="ab" style="left:1303px;top:340px;width:617px;height:625px;border:1px solid #a9a9a9;background:#fff"></div>
<div class="ab" style="left:1304px;top:341px;width:43px;height:623px;background:#efefef"></div>
<div class="ab" style="left:1304px;top:341px;width:615px;height:623px;overflow:hidden">
<div class="hx m" style="left:7px;top:0px;color:#a0a0a0">0000</div>
<div class="hx m" style="left:50px;top:0px">50 4f 53 54 20 2f 62 6f  6e 69 74 61 2f 6c 6f 67</div>
<div class="hx m" style="left:417px;top:0px">POST /bo nita/log</div>
<div class="hx m" style="left:7px;top:14px;color:#a0a0a0">0010</div>
<div class="hx m" style="left:50px;top:14px">69 6e 73 65 72 76 69 63  65 20 48 54 54 50 2f 31</div>
<div class="hx m" style="left:417px;top:14px">inservic e HTTP/1</div>
<div class="hx m" style="left:7px;top:28px;color:#a0a0a0">0020</div>
<div class="hx m" style="left:50px;top:28px">2e 31 0d 0a 48 6f 73 74  3a 20 66 6f 72 65 6c 61</div>
<div class="hx m" style="left:417px;top:28px">.1<span style="color:#a0a0a0">·</span><span style="color:#a0a0a0">·</span>Host : forela</div>
<div class="hx m" style="left:7px;top:42px;color:#a0a0a0">0030</div>
<div class="hx m" style="left:50px;top:42px">2e 63 6f 2e 75 6b 3a 38  30 38 30 0d 0a 55 73 65</div>
<div class="hx m" style="left:417px;top:42px">.co.uk:8 080<span style="color:#a0a0a0">·</span><span style="color:#a0a0a0">·</span>Use</div>
<div class="hx m" style="left:7px;top:56px;color:#a0a0a0">0040</div>
<div class="hx m" style="left:50px;top:56px">72 2d 41 67 65 6e 74 3a  20 70 79 74 68 6f 6e 2d</div>
<div class="hx m" style="left:417px;top:56px">r-Agent:  python-</div>
<div class="hx m" style="left:7px;top:70px;color:#a0a0a0">0050</div>
<div class="hx m" style="left:50px;top:70px">72 65 71 75 65 73 74 73  2f 32 2e 32 38 2e 31 0d</div>
<div class="hx m" style="left:417px;top:70px">requests /2.28.1<span style="color:#a0a0a0">·</span></div>
<div class="hx m" style="left:7px;top:84px;color:#a0a0a0">0060</div>
<div class="hx m" style="left:50px;top:84px">0a 41 63 63 65 70 74 2d  45 6e 63 6f 64 69 6e 67</div>
<div class="hx m" style="left:417px;top:84px"><span style="color:#a0a0a0">·</span>Accept- Encoding</div>
<div class="hx m" style="left:7px;top:98px;color:#a0a0a0">0070</div>
<div class="hx m" style="left:50px;top:98px">3a 20 67 7a 69 70 2c 20  64 65 66 6c 61 74 65 0d</div>
<div class="hx m" style="left:417px;top:98px">: gzip,  deflate<span style="color:#a0a0a0">·</span></div>
<div class="hx m" style="left:7px;top:112px;color:#a0a0a0">0080</div>
<div class="hx m" style="left:50px;top:112px">0a 41 63 63 65 70 74 3a  20 2a 2f 2a 0d 0a 43 6f</div>
<div class="hx m" style="left:417px;top:112px"><span style="color:#a0a0a0">·</span>Accept:  */*<span style="color:#a0a0a0">·</span><span style="color:#a0a0a0">·</span>Co</div>
<div class="hx m" style="left:7px;top:126px;color:#a0a0a0">0090</div>
<div class="hx m" style="left:50px;top:126px">6e 6e 65 63 74 69 6f 6e  3a 20 6b 65 65 70 2d 61</div>
<div class="hx m" style="left:417px;top:126px">nnection : keep-a</div>
<div class="hx m" style="left:7px;top:140px;color:#a0a0a0">00a0</div>
<div class="hx m" style="left:50px;top:140px">6c 69 76 65 0d 0a 43 6f  6e 74 65 6e 74 2d 54 79</div>
<div class="hx m" style="left:417px;top:140px">live<span style="color:#a0a0a0">·</span><span style="color:#a0a0a0">·</span>Co ntent-Ty</div>
<div class="hx m" style="left:7px;top:154px;color:#a0a0a0">00b0</div>
<div class="hx m" style="left:50px;top:154px">70 65 3a 20 61 70 70 6c  69 63 61 74 69 6f 6e 2f</div>
<div class="hx m" style="left:417px;top:154px">pe: appl ication/</div>
<div class="hx m" style="left:7px;top:168px;color:#a0a0a0">00c0</div>
<div class="hx m" style="left:50px;top:168px">78 2d 77 77 77 2d 66 6f  72 6d 2d 75 72 6c 65 6e</div>
<div class="hx m" style="left:417px;top:168px">x-www-fo rm-urlen</div>
<div class="hx m" style="left:7px;top:182px;color:#a0a0a0">00d0</div>
<div class="hx m" style="left:50px;top:182px">63 6f 64 65 64 0d 0a 43  6f 6f 6b 69 65 3a 20 78</div>
<div class="hx m" style="left:417px;top:182px">coded<span style="color:#a0a0a0">·</span><span style="color:#a0a0a0">·</span>C ookie: x</div>
<div class="hx m" style="left:7px;top:196px;color:#a0a0a0">00e0</div>
<div class="hx m" style="left:50px;top:196px">3d 78 0d 0a 43 6f 6e 74  65 6e 74 2d 4c 65 6e 67</div>
<div class="hx m" style="left:417px;top:196px">=x<span style="color:#a0a0a0">·</span><span style="color:#a0a0a0">·</span>Cont ent-Leng</div>
<div class="hx m" style="left:7px;top:210px;color:#a0a0a0">00f0</div>
<div class="hx m" style="left:50px;top:210px">74 68 3a 20 33 39 0d 0a  0d 0a 75 73 65 72 6e 61</div>
<div class="hx m" style="left:417px;top:210px">th: 39<span style="color:#a0a0a0">·</span><span style="color:#a0a0a0">·</span> <span style="color:#a0a0a0">·</span><span style="color:#a0a0a0">·</span>userna</div>
<div class="hx m" style="left:7px;top:224px;color:#a0a0a0">0100</div>
<div class="hx m" style="left:50px;top:224px">6d 65 3d 69 6e 73 74 61  6c 6c 26 70 61 73 73 77</div>
<div class="hx m" style="left:417px;top:224px">me=insta ll&amp;passw</div>
<div class="hx m" style="left:7px;top:238px;color:#a0a0a0">0110</div>
<div class="hx m" style="left:50px;top:238px">6f 72 64 3d 69 6e 73 74  61 6c 6c 26 5f 6c 3d 65</div>
<div class="hx m" style="left:417px;top:238px">ord=inst all&amp;_l=e</div>
<div class="hx m" style="left:7px;top:252px;color:#a0a0a0">0120</div>
<div class="hx m" style="left:50px;top:252px">6e</div>
<div class="hx m" style="left:417px;top:252px">n</div>
</div>
<div class="ab" style="left:1303px;top:966px;width:136px;height:23px;border:1px solid #b8b8b8;border-top-color:#c4c4c4;border-radius:0 0 3px 3px;background:#e6e6e6"></div>
<div class="ab s" style="left:1315px;top:969px;font-size:13.4px;line-height:15px;color:#000">Frame (105 bytes)</div>
<div class="ab" style="left:1438px;top:965px;width:204px;height:26px;border:1px solid #b8b8b8;border-top:none;border-radius:0 0 3px 3px;background:#fff"></div>
<div class="ab s" style="left:1450px;top:971px;line-height:15px;color:#000">Reassembled TCP (289 bytes)</div>
<svg class="ab" style="left:0;top:990px" width="60" height="23" viewBox="0 990 60 23">
<defs><linearGradient id="gyel" x1="0" y1="0" x2="1" y2="1"><stop offset="0" stop-color="#e8e890"/><stop offset="1" stop-color="#dcd848"/></linearGradient></defs>
<circle cx="17" cy="1002.9" r="6.6" fill="url(#gyel)" stroke="#5c5a30" stroke-width="1"/>
<rect x="34" y="996" width="10.5" height="13.4" fill="#f4f4ee" stroke="#d4d4cc" stroke-width="0.6"/>
<rect x="34" y="996" width="10" height="3.6" rx="1" fill="#2d9ad8"/>
<path d="M37,999.6 L38.5,996.5 L39.5,999.6 Z" fill="#fff"/>
<path d="M35.5,1002 h3 M35.5,1005 h2 M35.5,1008 h8" stroke="#c4c4bc" stroke-width="0.8"/>
<path d="M38,1005.2 L46,997.2" stroke="#3a3a3a" stroke-width="2.6" stroke-linecap="round"/>
<path d="M37.2,1006 L38.5,1003.8 L39.8,1005 Z" fill="#000"/>
</svg>
<svg class="ab" style="left:0;top:134px" width="24" height="130" viewBox="0 134 24 130">
<rect x="8" y="190" width="1.4" height="14" fill="#fff"/>
<rect x="8" y="204" width="1.4" height="42" fill="#8c949c"/>
<rect x="3" y="197" width="11" height="1.2" fill="#fff"/>
<path d="M12.5,195.3 L16.2,197.6 L12.5,199.9 Z" fill="#fff"/>
<rect x="4" y="211" width="11" height="1.2" fill="#8c949c"/>
<path d="M6,209.3 L2.5,211.6 L6,213.9 Z" fill="#8c949c"/>
<circle cx="8.7" cy="225.6" r="2.6" fill="#8c949c"/>
</svg>

<div class="ab s" style="left:63px;top:996px;font-size:13.4px;line-height:15px;color:#000">Hypertext Transfer Protocol: Protocol</div>
<div class="ab" style="left:1277px;top:996px;width:1px;height:14px;border-left:1px dotted #b0b0b0"></div>
<div class="ab s" style="left:1290px;top:996px;font-size:13.4px;line-height:15px;color:#000">Packets: 8387 · Displayed: 280 (3.3%) · Marked: 1 (0.0%)</div>
<div class="ab" style="left:1813px;top:996px;width:1px;height:14px;border-left:1px dotted #b0b0b0"></div>
<div class="ab s" style="left:1826px;top:996px;font-size:13.4px;line-height:15px;color:#000">Profile: Default</div>
<div class="ab" style="left:953px;top:337px;width:1px;height:1px;background:#a0a0a0"></div>
<div class="ab" style="left:1301px;top:659px;width:1px;height:1px;background:#a0a0a0"></div>
<div class="ab" style="left:956px;top:337px;width:1px;height:1px;background:#a0a0a0"></div>
<div class="ab" style="left:1301px;top:662px;width:1px;height:1px;background:#a0a0a0"></div>
<div class="ab" style="left:959px;top:337px;width:1px;height:1px;background:#a0a0a0"></div>
<div class="ab" style="left:1301px;top:665px;width:1px;height:1px;background:#a0a0a0"></div>
<div class="ab" style="left:962px;top:337px;width:1px;height:1px;background:#a0a0a0"></div>
<div class="ab" style="left:1301px;top:668px;width:1px;height:1px;background:#a0a0a0"></div>
<div class="ab" style="left:965px;top:337px;width:1px;height:1px;background:#a0a0a0"></div>
<div class="ab" style="left:1301px;top:671px;width:1px;height:1px;background:#a0a0a0"></div>
<div class="ab" style="left:968px;top:337px;width:1px;height:1px;background:#a0a0a0"></div>
<div class="ab" style="left:1301px;top:674px;width:1px;height:1px;background:#a0a0a0"></div>
<div class="ab" style="left:0;top:113px;width:1920px;height:1px;background:#c8c8c8"></div>
<div class="ab" style="left:2px;top:680px;width:473px;height:182px;border:3px solid #ff0000"></div>
<div class="ab" style="left:21px;top:697px;width:272px;height:94px;border:3px solid #ff0000"></div>
</body></html>
